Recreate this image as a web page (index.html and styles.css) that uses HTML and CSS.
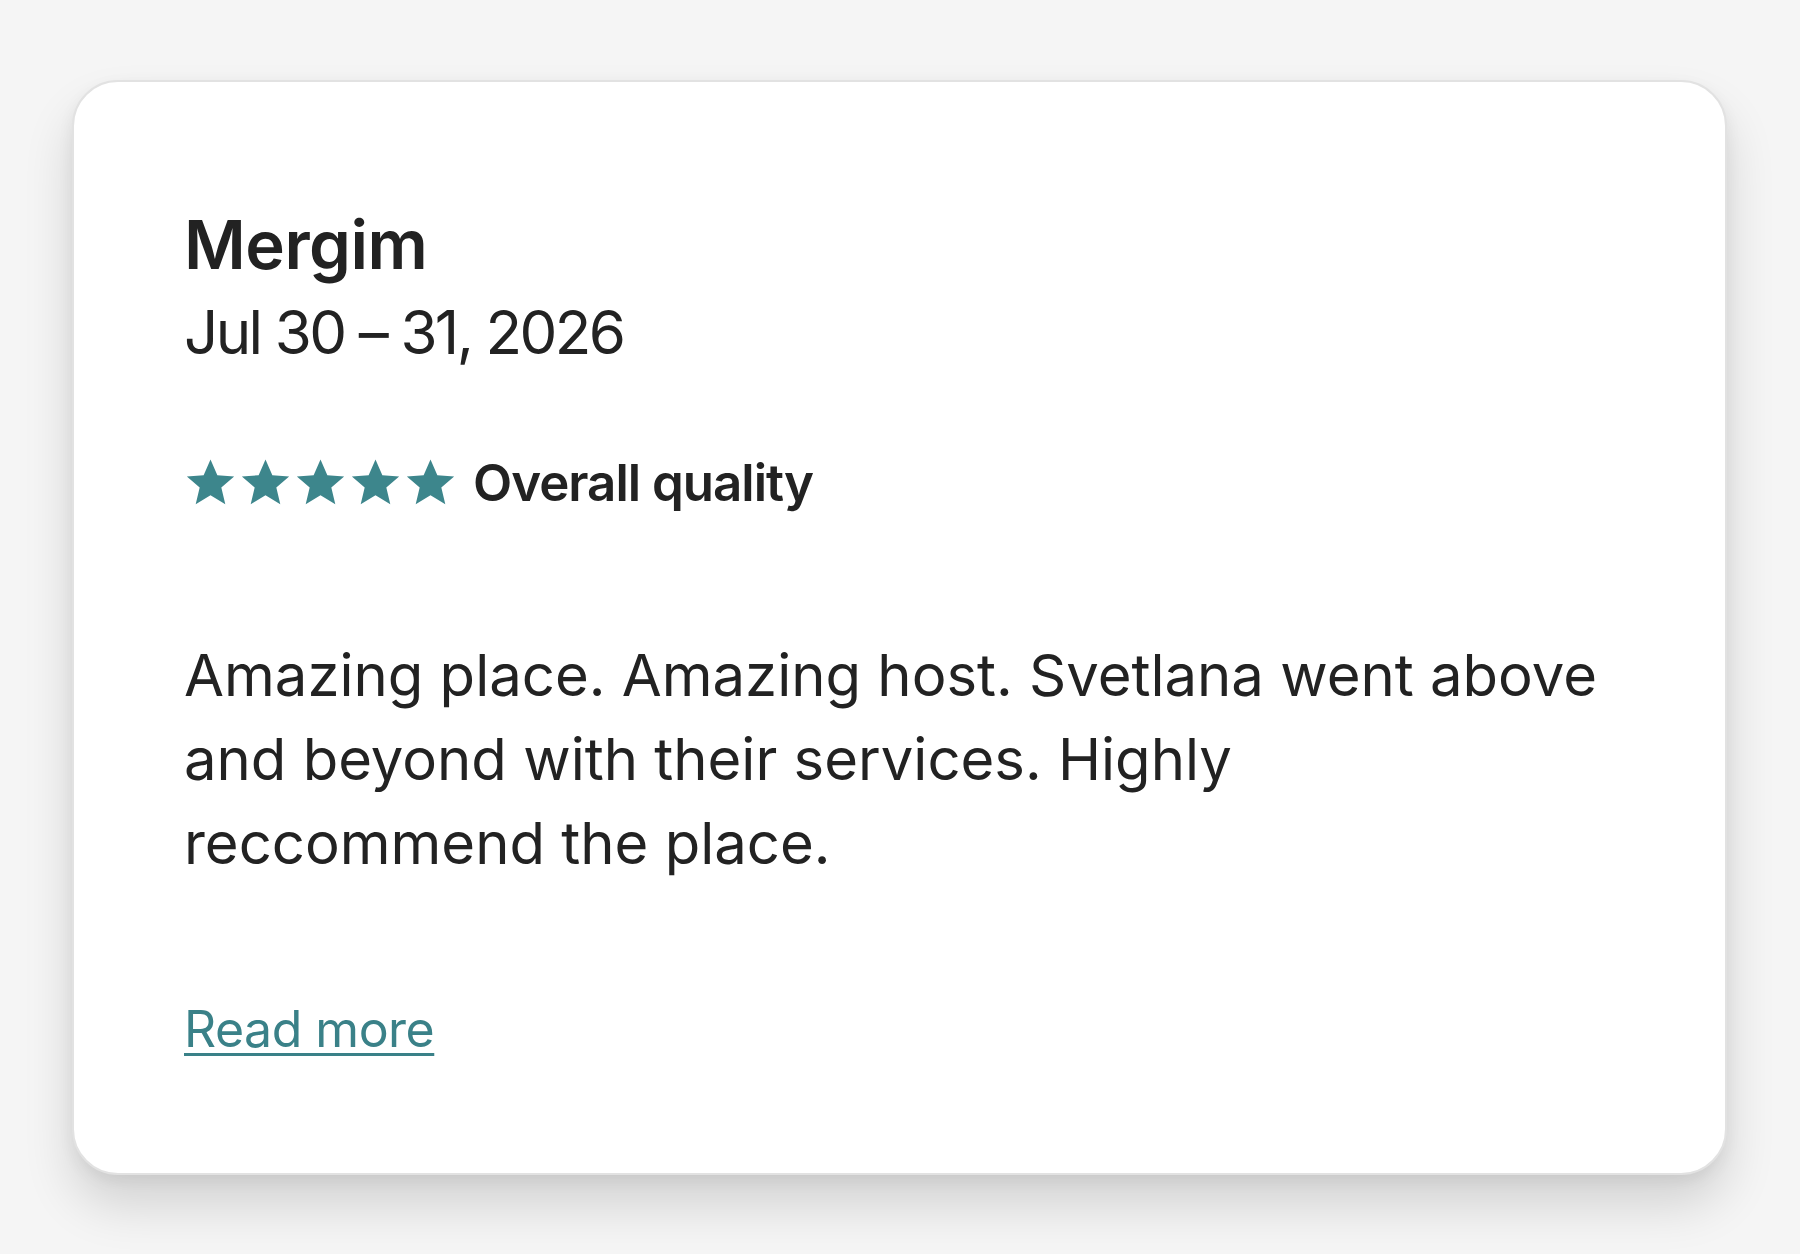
FILE: index.html
```html
<!DOCTYPE html>
<html lang="en">
<head>
<meta charset="utf-8">
<title>Review</title>
<link rel="stylesheet" href="styles.css">
</head>
<body>
<main class="stage">
  <article class="card">
    <h2 class="name">Mergim</h2>
    <p class="date">Jul 30 – 31, 2026</p>
    <div class="rating">
      <span class="stars" aria-label="5 stars">
        <svg class="star" viewBox="0 0 24 24"><path d="M12 1.6l3.1 7.1 7.6.6-5.8 5 1.8 7.5L12 17.8l-6.7 4 1.8-7.5-5.8-5 7.6-.6z"/></svg>
        <svg class="star" viewBox="0 0 24 24"><path d="M12 1.6l3.1 7.1 7.6.6-5.8 5 1.8 7.5L12 17.8l-6.7 4 1.8-7.5-5.8-5 7.6-.6z"/></svg>
        <svg class="star" viewBox="0 0 24 24"><path d="M12 1.6l3.1 7.1 7.6.6-5.8 5 1.8 7.5L12 17.8l-6.7 4 1.8-7.5-5.8-5 7.6-.6z"/></svg>
        <svg class="star" viewBox="0 0 24 24"><path d="M12 1.6l3.1 7.1 7.6.6-5.8 5 1.8 7.5L12 17.8l-6.7 4 1.8-7.5-5.8-5 7.6-.6z"/></svg>
        <svg class="star" viewBox="0 0 24 24"><path d="M12 1.6l3.1 7.1 7.6.6-5.8 5 1.8 7.5L12 17.8l-6.7 4 1.8-7.5-5.8-5 7.6-.6z"/></svg>
      </span>
      <span class="label">Overall quality</span>
    </div>
    <p class="body">Amazing place. Amazing host. Svetlana went above and beyond with their services. Highly reccommend the place.</p>
    <a class="more" href="#">Read more</a>
  </article>
</main>
</body>
</html>
```

FILE: styles.css
```css
html, body {
  margin: 0;
  padding: 0;
}
body {
  width: 1800px;
  height: 1254px;
  background: #f5f5f5;
  font-family: Inter, "Noto Sans", sans-serif;
  color: #222222;
  overflow: hidden;
}
.stage {
  padding: 80px 72px 0 72px;
}
.card {
  box-sizing: border-box;
  width: 1655px;
  height: 1095px;
  background: #ffffff;
  border: 2px solid #e2e2e2;
  border-radius: 46px;
  box-shadow: 0 30px 50px rgba(0, 0, 0, 0.14), 0 6px 16px rgba(0, 0, 0, 0.06);
  padding: 120px 110px 0 110px;
  display: flex;
  flex-direction: column;
  align-items: flex-start;
}
.name {
  margin: 0;
  font-size: 67px;
  font-weight: 600;
  line-height: 86px;
  letter-spacing: -0.5px;
}
.date {
  margin: 6px 0 0 0;
  font-size: 60px;
  font-weight: 400;
  line-height: 76px;
  letter-spacing: -2.6px;
}
.rating {
  margin-top: 82px;
  display: flex;
  align-items: center;
  gap: 16px;
}
.stars {
  display: flex;
  gap: 2px;
}
.star {
  width: 53px;
  height: 53px;
  fill: #3d868c;
}
.label {
  font-size: 51px;
  font-weight: 600;
  letter-spacing: -1px;
}
.body {
  margin: 120px 0 0 0;
  max-width: 1417px;
  font-size: 58px;
  line-height: 84px;
  letter-spacing: 0;
}
.more {
  margin-top: 114px;
  font-size: 50px;
  color: #3a8188;
  letter-spacing: -0.5px;
  text-decoration: underline;
  text-decoration-thickness: 3px;
  text-underline-offset: 6px;
}
```
